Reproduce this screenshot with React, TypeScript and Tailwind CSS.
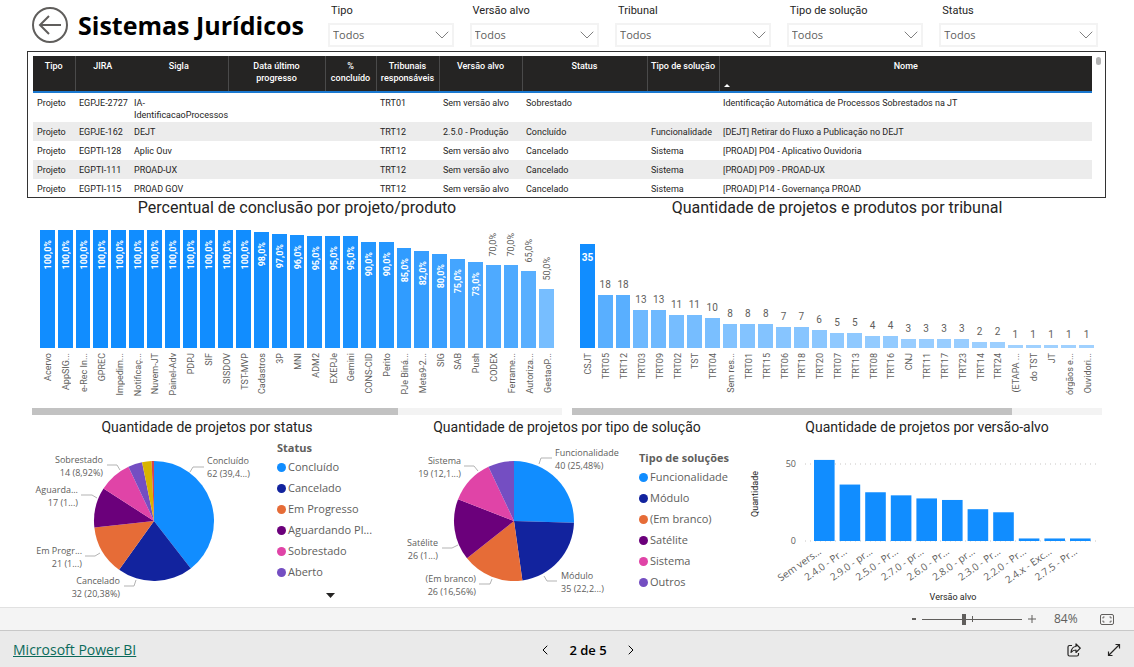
import { useState } from "react";
import { ChevronDown, ChevronLeft, ChevronRight } from "lucide-react";

const filters = [
  { id: "tipo", label: "Tipo" },
  { id: "versao", label: "Versão alvo" },
  { id: "tribunal", label: "Tribunal" },
  { id: "solucao", label: "Tipo de solução" },
  { id: "status", label: "Status" }
];

const columns = [
  { label: "Tipo", width: "w-[42px] px-0.5" },
  { label: "JIRA", width: "w-[55px] px-0.5" },
  { label: "Sigla", width: "w-[98px] px-0.5" },
  { label: "Data último progresso", width: "w-[97px] px-4" },
  { label: "% concluído", width: "w-[51px] px-0.5" },
  { label: "Tribunais responsáveis", width: "w-[63px] px-0.5" },
  { label: "Versão alvo", width: "w-[83px] px-0.5" },
  { label: "Status", width: "w-[125px] px-0.5" },
  { label: "Tipo de solução", width: "w-[72px]" },
  { label: "Nome", width: "px-0.5" }
];

const rows = [
  ["Projeto", "EGPJE-2727", "IA- IdentificacaoProcessos", "", "", "TRT01", "Sem versão alvo", "Sobrestado", "", "Identificação Automática de Processos Sobrestados na JT"],
  ["Projeto", "EGPJE-162", "DEJT", "", "", "TRT12", "2.5.0 - Produção", "Concluído", "Funcionalidade", "[DEJT] Retirar do Fluxo a Publicação no DEJT"],
  ["Projeto", "EGPTI-128", "Aplic Ouv", "", "", "TRT12", "Sem versão alvo", "Cancelado", "Sistema", "[PROAD] P04 - Aplicativo Ouvidoria"],
  ["Projeto", "EGPTI-111", "PROAD-UX", "", "", "TRT12", "Sem versão alvo", "Cancelado", "Sistema", "[PROAD] P09 - PROAD-UX"],
  ["Projeto", "EGPTI-115", "PROAD GOV", "", "", "TRT12", "Sem versão alvo", "Cancelado", "Sistema", "[PROAD] P14 - Governança PROAD"]
];

const rowHeights = ["h-[30px] pt-1", "h-[19px] pt-1", "h-[19px] pt-1", "h-[19px] pt-1", "h-[16px] pt-1"];

type Bar = [string, number];

const completion: Bar[] = [
  ["Acervo", 100], ["AppSIG...", 100], ["e-Rec In...", 100], ["GPREC", 100], ["Impedim...", 100],
  ["Notificaç...", 100], ["Nuvem-JT", 100], ["Painel-Adv", 100], ["PDPJ", 100], ["SIF", 100],
  ["SISDOV", 100], ["TST-MVP", 100], ["Cadastros", 98], ["3P", 97], ["MNI", 96], ["ADM2", 95],
  ["EXEPJe", 95], ["Gemini", 95], ["CONS-CID", 90], ["Perito", 90], ["PJe Biná...", 85],
  ["Meta9-2...", 82], ["SIG", 80], ["SAB", 75], ["Push", 73], ["CODEX", 70], ["Ferrame...", 70],
  ["Autoriza...", 65], ["GestaoP...", 50]
];

const courts: Bar[] = [
  ["CSJT", 35], ["TRT05", 18], ["TRT12", 18], ["TRT03", 13], ["TRT09", 13], ["TRT02", 11],
  ["TST", 11], ["TRT04", 10], ["Sem res...", 8], ["TRT01", 8], ["TRT15", 8], ["TRT06", 7],
  ["TRT18", 7], ["TRT20", 6], ["TRT07", 5], ["TRT13", 5], ["TRT08", 4], ["TRT16", 4], ["CNJ", 3],
  ["TRT11", 3], ["TRT17", 3], ["TRT23", 3], ["TRT14", 2], ["TRT24", 2], ["(ETAPA ...", 1],
  ["do TST", 1], ["JT", 1], ["órgãos e...", 1], ["Ouvidori...", 1]
];

const versions: Bar[] = [
  ["Sem vers...", 52], ["2.4.0 - Pr...", 36], ["2.9.0 - pr...", 31], ["2.5.0 - Pr...", 29],
  ["2.7.0 - pr...", 27], ["2.6.0 - Pr...", 26], ["2.8.0 - pr...", 20], ["2.3.0 - Pr...", 18],
  ["2.2.0 - Pr...", 1], ["2.4.x - Exc...", 1], ["2.7.5 - Pr...", 1]
];

const palette = ["#118DFF", "#12239E", "#E66C37", "#6B007B", "#E044A7", "#744EC2", "#D9B300", "#D64550"];

type Callout = {
  lines: [string, string];
  x: number;
  y: number;
  anchor: "start" | "end";
  leader: string;
};

const statusCallouts: Callout[] = [
  { lines: ["Concluído", "62 (39,4...)"], x: 180, y: 27, anchor: "start", leader: "163,35 166,30 177,30" },
  { lines: ["Cancelado", "32 (20,38%)"], x: 93, y: 147, anchor: "end", leader: "97,149 107,149 109,143" },
  { lines: ["Em Progr...", "21 (1...)"], x: 55, y: 117, anchor: "end", leader: "58,119 68,119 73,116" },
  { lines: ["Aguarda...", "17 (1...)"], x: 51, y: 56, anchor: "end", leader: "54,58 65,58 70,61" },
  { lines: ["Sobrestado", "14 (8,92%)"], x: 76, y: 26, anchor: "end", leader: "80,28 90,28 93,33" }
];

const solutionCallouts: Callout[] = [
  { lines: ["Funcionalidade", "40 (25,48%)"], x: 168, y: 19, anchor: "start", leader: "152,27 154,21 165,21" },
  { lines: ["Módulo", "35 (22,2...)"], x: 174, y: 142, anchor: "start", leader: "157,139 160,144 170,144" },
  { lines: ["(Em branco)", "26 (16,56%)"], x: 89, y: 145, anchor: "end", leader: "92,147 103,147 105,142" },
  { lines: ["Satélite", "26 (1...)"], x: 51, y: 109, anchor: "end", leader: "55,111 65,111 71,108" },
  { lines: ["Sistema", "19 (12,1...)"], x: 74, y: 27, anchor: "end", leader: "77,29 87,29 91,34" }
];

// t = 0 is the full blue, t = 1 the palest step of the scale
function shade(t: number) {
  return `rgb(${Math.round(17 + 143 * t)}, ${Math.round(141 + 68 * t)}, 255)`;
}

function Filter({ id, label }: { id: string; label: string }) {
  return (
    <div className="min-w-0">
      <label htmlFor={id} className="block pl-[3px] pt-px font-['Roboto',sans-serif] text-[11px] leading-[14px] text-[#252423]">
        {label}
      </label>
      <div className="relative mt-[5px]">
        <select
          id={id}
          className="block h-6 w-full appearance-none border-2 border-[#f3f3f3] bg-white pl-[3px] text-[11px] leading-5 text-[#605e5c]"
        >
          <option>Todos</option>
        </select>
        <ChevronDown className="pointer-events-none absolute right-0 top-0 h-6 w-6 text-[#808080]" strokeWidth={1} />
      </div>
    </div>
  );
}

function ProjectsTable() {
  return (
    <div className="relative ml-[27px] mr-7 h-[147px] overflow-hidden border border-[#333333] pl-[5px] pr-[13px] pt-1">
      <table className="w-full table-fixed border-collapse font-['Roboto',sans-serif] text-[9px] leading-3 text-[#252423]">
        <thead>
          <tr className="h-9 border-b-2 border-[#1a78cf] bg-[#252423] text-white">
            {columns.map((col, i) => (
              <th
                key={col.label}
                className={`relative pt-1 align-top font-medium ${col.width} ${
                  i === 1 || i > 2 ? "border-l border-[#4a4a4a]" : ""
                }`}
              >
                {col.label}
                {col.label === "Nome" ? (
                  <svg viewBox="0 0 6 3" className="absolute bottom-1 left-1 h-[3px] w-1.5" fill="white">
                    <path d="M3 0 6 3H0Z" />
                  </svg>
                ) : null}
              </th>
            ))}
          </tr>
        </thead>
        <tbody>
          {rows.map((row, i) => (
            <tr key={row[1]} className="even:bg-[#ececec]">
              {row.map((cell, c) => (
                <td
                  key={c}
                  className={`pl-1 align-top ${c === 2 ? "" : "whitespace-nowrap"} ${rowHeights[i]}`}
                >
                  {cell}
                </td>
              ))}
            </tr>
          ))}
        </tbody>
      </table>
      <div className="absolute right-1 top-[5px] h-2 w-[5px] rounded-full bg-[#b3b3b3]" />
    </div>
  );
}

function ScrollTrack({ thumb }: { thumb: number }) {
  return (
    <div className="h-[7px] bg-[#f3f3f3]">
      <div className="h-full bg-[#c2c2c2]" style={{ width: `${thumb}%` }} />
    </div>
  );
}

type BarChartProps = {
  title: string;
  data: Bar[];
  unit: number;
  low: number;
  high: number;
  thumb: number;
  percent?: boolean;
};

function BarChart({ title, data, unit, low, high, thumb, percent = false }: BarChartProps) {
  return (
    <section className="min-w-0">
      <h2 className="text-center font-['Roboto',sans-serif] text-[16px] leading-5 text-[#252423]">{title}</h2>
      <div className="flex h-[130px] items-end gap-[3px] px-2">
        {data.map(([name, value]) => {
          const inside = percent ? value > 70 : value > 30;
          const text = percent ? `${value},0%` : `${value}`;
          const label = (
            <span
              className={`font-['Roboto',sans-serif] ${
                percent ? "rotate-180 text-[9px] leading-[10px] [writing-mode:vertical-rl]" : "text-[10px] leading-3"
              } ${inside ? "font-bold text-white" : "text-[#605e5c]"}`}
            >
              {text}
            </span>
          );

          return (
            <div key={name} className="flex min-w-0 flex-1 flex-col items-center">
              {inside ? null : <div className={percent ? "mb-0.5" : "mb-px"}>{label}</div>}
              <div
                className={`flex w-full items-start justify-center ${inside ? (percent ? "pl-0.5 pt-2.5" : "pt-2") : ""}`}
                style={{ height: Math.round(value * unit), background: shade((high - value) / (high - low)) }}
              >
                {inside ? label : null}
              </div>
            </div>
          );
        })}
      </div>
      <div className="flex h-[60px] gap-[3px] px-2 pt-[5px]">
        {data.map(([name]) => (
          <div key={name} className="flex min-w-0 flex-1 items-start justify-center pl-0.5">
            <span className="rotate-180 whitespace-nowrap text-right font-['Roboto',sans-serif] text-[9px] leading-[10px] text-[#605e5c] [writing-mode:vertical-rl]">
              {name}
            </span>
          </div>
        ))}
      </div>
      <ScrollTrack thumb={thumb} />
    </section>
  );
}

function slicePath(from: number, to: number, cx: number, cy: number, r: number) {
  const point = (t: number) => {
    const a = t * 2 * Math.PI - Math.PI / 2;
    return `${(cx + r * Math.cos(a)).toFixed(2)} ${(cy + r * Math.sin(a)).toFixed(2)}`;
  };
  return `M${cx} ${cy}L${point(from)}A${r} ${r} 0 ${to - from > 0.5 ? 1 : 0} 1 ${point(to)}Z`;
}

function Pie({ values, callouts, label }: { values: number[]; callouts: Callout[]; label: string }) {
  const total = values.reduce((sum, v) => sum + v, 0);
  let start = 0;

  return (
    <svg viewBox="0 0 246 168" className="w-full" role="img" aria-label={label}>
      {values.map((value, i) => {
        const from = start;
        start += value / total;
        return <path key={i} d={slicePath(from, start, 127, 84, 60)} fill={palette[i]} />;
      })}
      {callouts.map((c) => (
        <g key={c.lines[0]}>
          <polyline points={c.leader} fill="none" stroke="#b3b3b3" />
          <text x={c.x} y={c.y} textAnchor={c.anchor} fontSize="9" fill="#605e5c">
            {c.lines[0]}
          </text>
          <text x={c.x} y={c.y + 13} textAnchor={c.anchor} fontSize="9" fill="#605e5c">
            {c.lines[1]}
          </text>
        </g>
      ))}
    </svg>
  );
}

function Legend({ title, items }: { title: string; items: string[] }) {
  return (
    <div className="min-w-0 pl-1 text-[11px] text-[#605e5c]">
      <h3 className="whitespace-nowrap font-bold leading-[18px]">{title}</h3>
      <ul>
        {items.map((item, i) => (
          <li key={item} className="flex h-[21px] items-center gap-0.5 whitespace-nowrap">
            <span className="h-[9px] w-[9px] shrink-0 rounded-full" style={{ background: palette[i] }} />
            {item}
          </li>
        ))}
      </ul>
    </div>
  );
}

function PanelTitle({ children }: { children: string }) {
  return (
    <h2 className="whitespace-nowrap text-center font-['Roboto',sans-serif] text-[14px] leading-5 text-[#252423]">
      {children}
    </h2>
  );
}

function VersionChart() {
  return (
    <svg viewBox="0 0 360 168" className="w-full" role="img" aria-label="Quantidade de projetos por versão-alvo">
      {[0, 50].map((tick) => (
        <g key={tick}>
          <line x1="58" x2="352" y1={104 - tick * 1.54} y2={104 - tick * 1.54} stroke="#c8c6c4" strokeDasharray="1 4" />
          <text x="49" y={107 - tick * 1.54} textAnchor="end" fontSize="9" fill="#605e5c">
            {tick}
          </text>
        </g>
      ))}
      {versions.map(([name, value], i) => {
        const x = 67 + i * 25.6;
        return (
          <g key={name}>
            <rect x={x} y={103 - value * 1.54} width="20.6" height={value * 1.54 + 1} fill="#118DFF" />
            <text transform={`translate(${x + 8} 116) rotate(-35)`} textAnchor="end" fontSize="10" fill="#605e5c">
              {name}
            </text>
          </g>
        );
      })}
      <text
        transform="translate(11 57) rotate(-90)"
        textAnchor="middle"
        fontSize="9"
        fill="#252423"
        className="font-['Roboto',sans-serif]"
      >
        Quantidade
      </text>
      <text x="206" y="163" textAnchor="middle" fontSize="9" fill="#252423" className="font-['Roboto',sans-serif]">
        Versão alvo
      </text>
    </svg>
  );
}

function ZoomBar() {
  const [zoom, setZoom] = useState(84);

  return (
    <div className="flex h-6 items-center justify-end border-b border-t border-b-[#c8c8c8] border-t-[#e1e1e1] bg-[#f4f4f4] pr-5 text-[#605e5c]">
      <button type="button" aria-label="Reduzir" onClick={() => setZoom(zoom - 10)} className="flex h-4 w-2 items-center justify-center">
        <span className="h-0.5 w-1 bg-[#605e5c]" />
      </button>
      <div className="relative ml-1 flex w-[100px] items-center">
        <span className="absolute left-1/2 h-1.5 w-px bg-[#605e5c]" />
        <input
          type="range"
          aria-label="Zoom"
          min={0}
          max={200}
          value={zoom}
          onChange={(e) => setZoom(Number(e.target.value))}
          className="relative h-px w-full appearance-none bg-[#605e5c] [&::-webkit-slider-thumb]:h-[11px] [&::-webkit-slider-thumb]:w-1 [&::-webkit-slider-thumb]:appearance-none [&::-webkit-slider-thumb]:bg-[#605e5c]"
        />
      </div>
      <button type="button" aria-label="Ampliar" onClick={() => setZoom(zoom + 10)} className="ml-1.5 flex h-4 w-2 items-center justify-center">
        <svg viewBox="0 0 8 8" className="h-2 w-2" stroke="currentColor">
          <path d="M4 0v8M0 4h8" />
        </svg>
      </button>
      <span className="ml-[18px] w-7 text-[12px] leading-4">{zoom}%</span>
      <button type="button" aria-label="Ajustar à página" className="ml-[18px]">
        <svg viewBox="0 0 14 11" className="h-[11px] w-3.5" fill="none" stroke="currentColor">
          <rect x=".5" y=".5" width="13" height="10" rx="1.5" />
          <path d="M3 4.500V3h1.500M9.500 3H11v1.500M11 6.500V8H9.500M4.500 8H3V6.500" />
        </svg>
      </button>
    </div>
  );
}

function Footer() {
  return (
    <footer className="grid h-9 grid-cols-3 items-center bg-[#eaeaea] pl-[13px] pr-[13px] pt-0.5">
      <a href="#powerbi" className="justify-self-start text-[14px] leading-5 text-[#0b6a5b] underline">
        Microsoft Power BI
      </a>
      <div className="flex items-center justify-center gap-4 pl-[42px] text-black">
        <button type="button" aria-label="Página anterior">
          <ChevronLeft className="h-4 w-4" strokeWidth={1.5} />
        </button>
        <span className="text-[13px] font-semibold leading-5">2 de 5</span>
        <button type="button" aria-label="Próxima página">
          <ChevronRight className="h-4 w-4" strokeWidth={1.5} />
        </button>
      </div>
      <div className="flex items-center gap-[26px] justify-self-end text-[#252423]">
        <button type="button" aria-label="Compartilhar">
          <svg viewBox="0 0 14 14" className="h-3.5 w-3.5" fill="none" stroke="currentColor" strokeWidth="1.2" strokeLinejoin="round">
            <path d="M5 2.500H2.500a1.500 1.500 0 0 0-1.500 1.500v7.500A1.500 1.500 0 0 0 2.500 13H10a1.500 1.500 0 0 0 1.500-1.500V10" />
            <path d="M9 1v2.500C6 3.500 4.500 5.500 4 9.500 5.500 7.500 7 7 9 7v2.500L13.300 5.200Z" />
          </svg>
        </button>
        <button type="button" aria-label="Tela inteira">
          <svg viewBox="0 0 14 14" className="h-3.5 w-3.5" fill="none" stroke="currentColor" strokeWidth="1.2">
            <path d="M8.500 1.500h4v4M12.500 1.500l-11 11M5.500 12.500h-4v-4" />
          </svg>
        </button>
      </div>
    </footer>
  );
}

export default function App() {
  return (
    <div className="flex min-h-screen flex-col bg-white font-['Open_Sans',sans-serif]">
      <header className="flex pb-1 pl-8 pr-9 pt-[3px]">
        <div className="flex w-[296px] shrink-0 items-center gap-2.5">
          <button type="button" aria-label="Voltar" className="shrink-0">
            <svg viewBox="0 0 36 36" className="h-9 w-9" fill="none" stroke="#605e5c" strokeWidth="2">
              <circle cx="18" cy="18" r="17" />
              <path d="M29 18H8M17 9l-9 9 9 9" />
            </svg>
          </button>
          <h1 className="whitespace-nowrap text-[25px] font-bold leading-9 text-black">Sistemas Jurídicos</h1>
        </div>
        <div className="grid min-w-0 flex-1 grid-cols-[125fr_129fr_155fr_136fr_158fr] gap-4">
          {filters.map((filter) => (
            <Filter key={filter.id} {...filter} />
          ))}
        </div>
      </header>

      <main className="flex-1">
        <ProjectsTable />

        <div className="grid grid-cols-2 gap-2.5 px-8">
          <BarChart
            title="Percentual de conclusão por projeto/produto"
            data={completion}
            unit={1.18}
            low={30}
            high={100}
            thumb={69}
            percent
          />
          <BarChart
            title="Quantidade de projetos e produtos por tribunal"
            data={courts}
            unit={2.96}
            low={1}
            high={35}
            thumb={83}
          />
        </div>

        <div className="grid grid-cols-3 px-[27px] pt-0.5">
          <section>
            <PanelTitle>Quantidade de projetos por status</PanelTitle>
            <div className="grid grid-cols-[246fr_114fr]">
              <Pie
                label="Quantidade de projetos por status"
                values={[62, 32, 21, 17, 14, 6, 4, 1]}
                callouts={statusCallouts}
              />
              <div className="pt-0.5">
                <Legend
                  title="Status"
                  items={["Concluído", "Cancelado", "Em Progresso", "Aguardando Pl...", "Sobrestado", "Aberto"]}
                />
                <button type="button" aria-label="Mais itens" className="mx-auto mt-2.5 block">
                  <svg viewBox="0 0 9 5" className="h-[5px] w-[9px]" fill="#252423">
                    <path d="M0 0h9L4.500 5Z" />
                  </svg>
                </button>
              </div>
            </div>
          </section>

          <section>
            <PanelTitle>Quantidade de projetos por tipo de solução</PanelTitle>
            <div className="grid grid-cols-[246fr_114fr]">
              <Pie
                label="Quantidade de projetos por tipo de solução"
                values={[40, 35, 26, 26, 19, 11]}
                callouts={solutionCallouts}
              />
              <div className="pl-0.5 pt-3">
                <Legend
                  title="Tipo de soluções"
                  items={["Funcionalidade", "Módulo", "(Em branco)", "Satélite", "Sistema", "Outros"]}
                />
              </div>
            </div>
          </section>

          <section>
            <PanelTitle>Quantidade de projetos por versão-alvo</PanelTitle>
            <VersionChart />
          </section>
        </div>
      </main>

      <ZoomBar />
      <Footer />
    </div>
  );
}
